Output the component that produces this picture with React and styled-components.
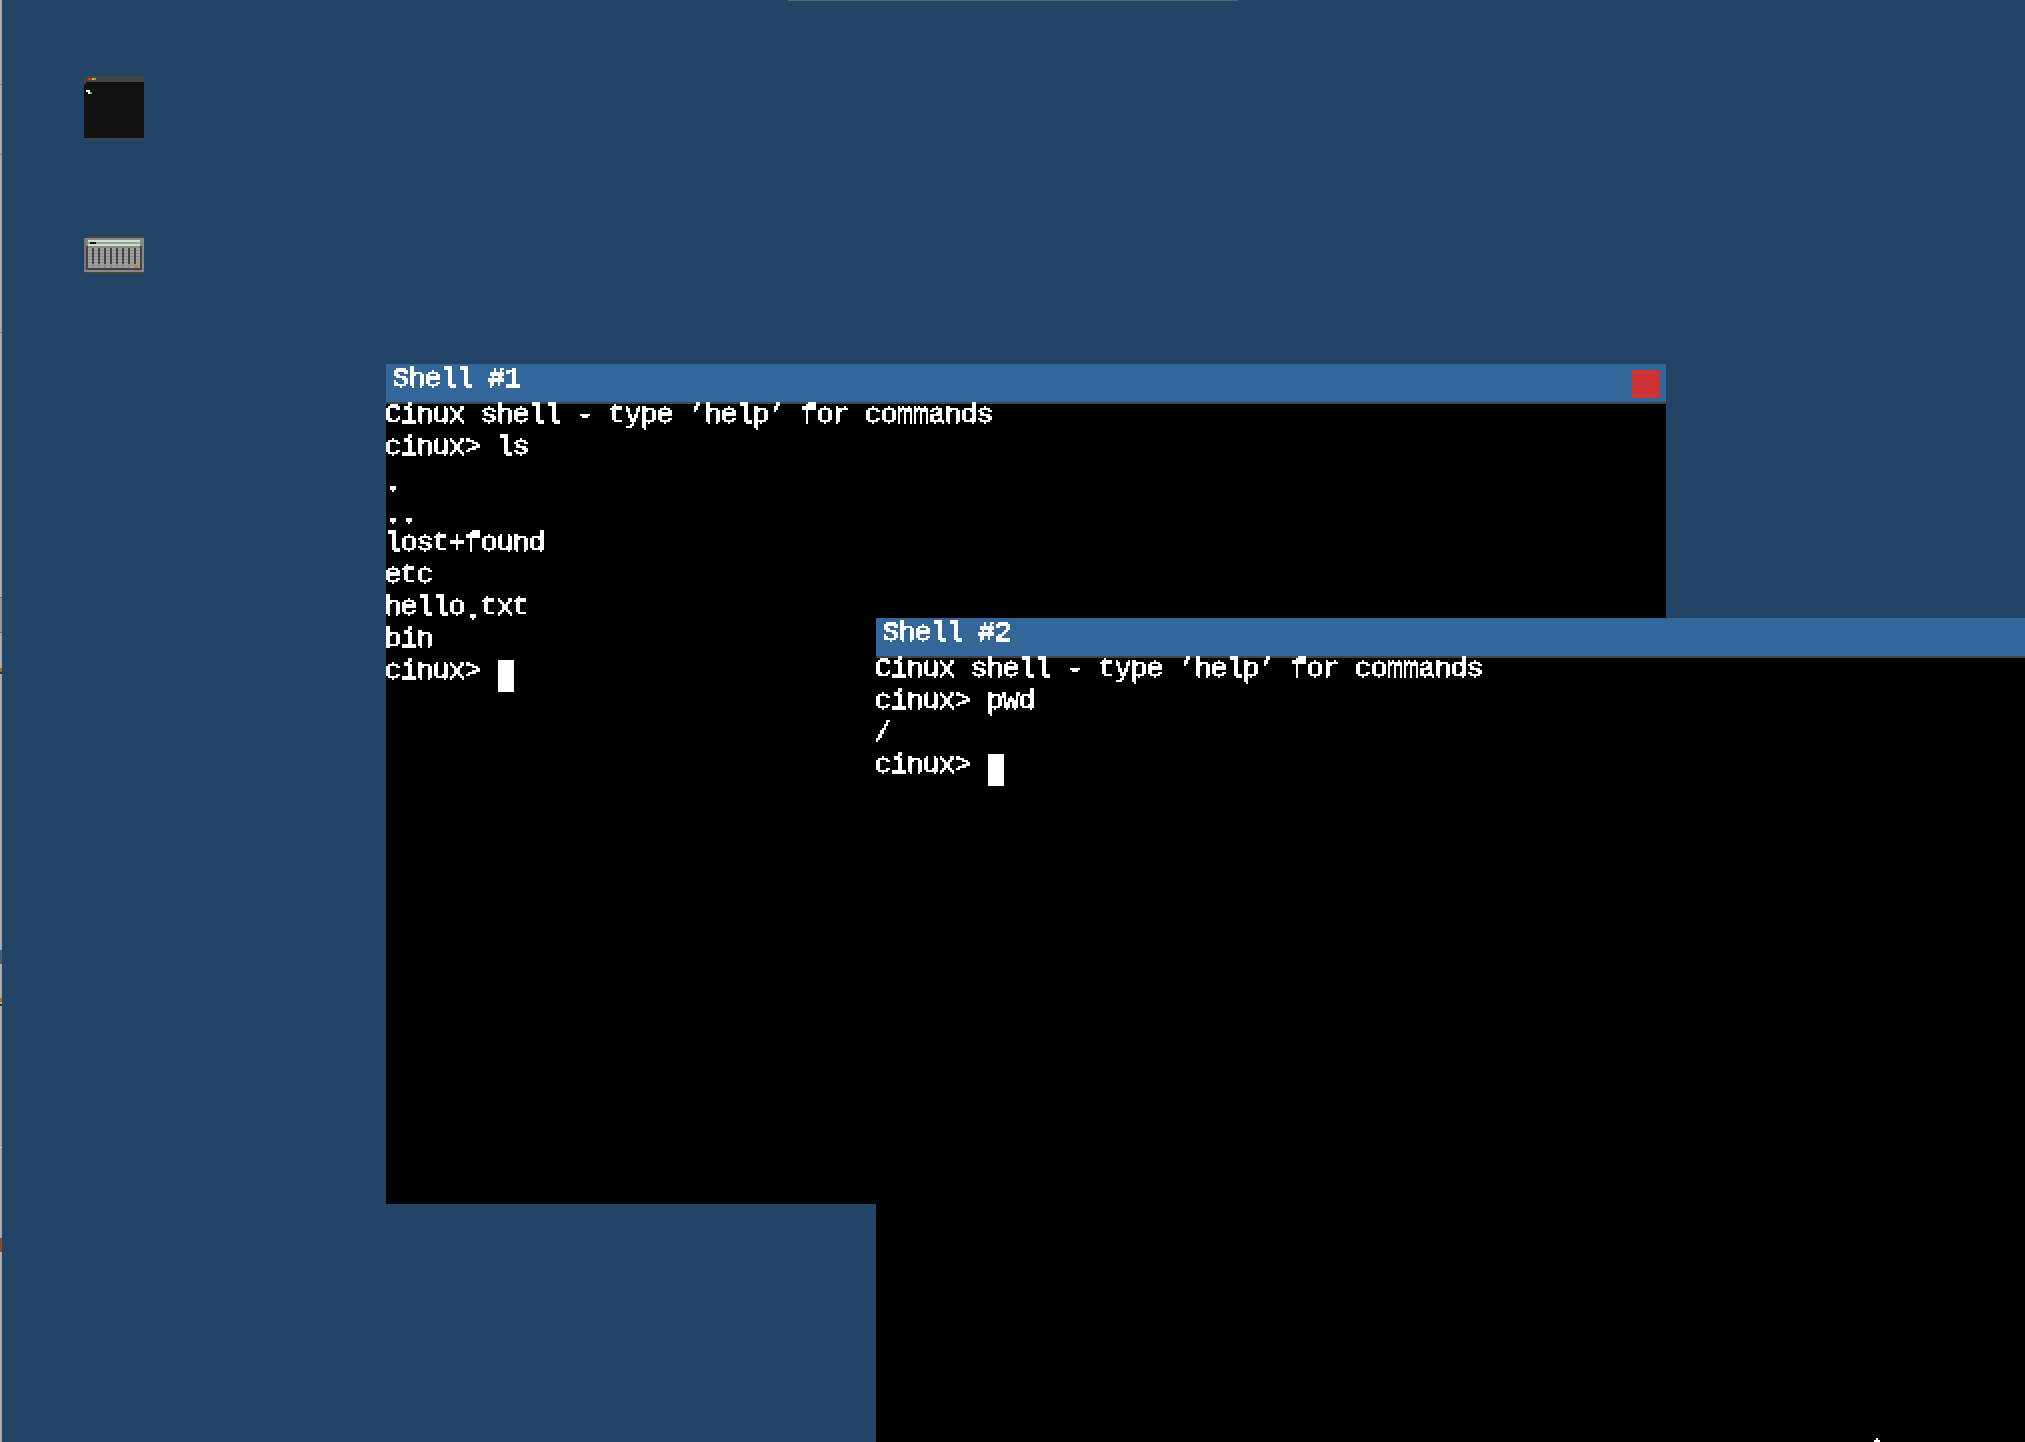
import React from 'react';
import styled, { createGlobalStyle } from 'styled-components';

const GlobalStyle = createGlobalStyle`
  html, body {
    margin: 0;
    padding: 0;
    background: #224466;
  }
`;

// Desktop is the free canvas, windows sit on it at their own coordinates
const Desktop = styled.div`
  position: relative;
  width: 2025px;
  height: 1442px;
  overflow: hidden;
  background: #224466;
  font-family: "Liberation Mono", "DejaVu Sans Mono", monospace;
  font-size: 28px;
  letter-spacing: -0.8px;
  color: #fff;
  -webkit-text-stroke: 0.5px #fff;
`;

const TopSliver = styled.div`
  position: absolute;
  left: 788px;
  top: 0;
  width: 450px;
  height: 1px;
  background: #666;
`;

const EdgeStrip = styled.svg`
  position: absolute;
  left: 0;
  top: 0;
  display: block;
`;

const IconColumn = styled.div`
  display: flex;
  flex-direction: column;
  gap: 96px;
  position: absolute;
  left: 84px;
  top: 76px;
`;

const PixelIcon = styled.svg`
  display: block;
  shape-rendering: crispEdges;
`;

const Win = styled.section`
  position: absolute;
  left: ${(p) => p.$x}px;
  top: ${(p) => p.$y}px;
  width: 1280px;
  height: 840px;
  background: #000;
  display: flex;
  flex-direction: column;
`;

const TitleBar = styled.header`
  height: 38px;
  box-sizing: border-box;
  padding: 4px 6px 0 6px;
  background: #336699;
  display: flex;
  justify-content: space-between;
  line-height: 21px;
  white-space: pre;
`;

const TitleText = styled.span`
  filter: url(#blocky);
`;

const CloseButton = styled.div`
  width: 28px;
  height: 28px;
  margin-top: 2px;
  background: #cc3333;
`;

const Separator = styled.div`
  height: 2px;
  background: #444;
`;

const Output = styled.div`
  display: flex;
  flex-direction: column;
  margin-left: -2px;
  filter: url(#blocky);
`;

const Line = styled.div`
  display: flex;
  align-items: flex-start;
  height: 32px;
  line-height: 21px;
  white-space: pre;
`;

// the shell font draws its full stop lower than the baseline
const LowDot = styled.span`
  margin-top: 4px;
`;

const Caret = styled.span`
  width: 16px;
  height: 32px;
  margin-left: 2px;
  background: #fff;
`;

const Pointer = styled.svg`
  position: absolute;
  left: 1874px;
  top: 1438px;
  display: block;
  shape-rendering: crispEdges;
`;

const HiddenDefs = styled.svg`
  position: absolute;
  width: 0;
  height: 0;
`;

const px = (x, y, w, h, fill) => <rect key={`${x}-${y}-${w}-${h}-${fill}`} x={x} y={y} width={w} height={h} fill={fill} />;

const TerminalIcon = () => (
  <PixelIcon width="60" height="64" viewBox="0 0 60 64">
    {px(2, 0, 58, 6, '#444444')}
    {px(0, 2, 2, 6, '#444444')}
    {px(0, 6, 60, 56, '#111111')}
    {px(0, 6, 2, 2, '#444444')}
    {px(2, 62, 58, 2, '#444444')}
    {px(4, 2, 4, 2, '#cc3333')}
    {px(8, 2, 2, 2, '#ccbb33')}
    {px(10, 2, 2, 2, '#33cc33')}
    {px(2, 14, 4, 2, '#ffffff')}
    {px(4, 16, 2, 2, '#ffffff')}
    {px(6, 16, 2, 2, '#33cc33')}
  </PixelIcon>
);

const keyColumns = [0, 1, 2, 3, 4, 5, 6, 7, 8];
const keyRows = [0, 1, 2, 3, 4, 5, 6];

const KeyboardIcon = () => (
  <PixelIcon width="60" height="38" viewBox="0 0 60 38">
    {px(2, 0, 58, 2, '#444444')}
    {px(0, 2, 60, 34, '#888888')}
    {px(0, 2, 2, 32, '#777777')}
    {px(2, 36, 58, 2, '#444444')}
    {px(4, 4, 52, 2, '#cfe0c8')}
    {px(4, 6, 52, 2, '#93a58f')}
    {px(6, 6, 6, 2, '#111111')}
    {px(4, 8, 52, 2, '#cfe0c8')}
    {px(2, 10, 2, 22, '#444444')}
    {px(56, 10, 2, 24, '#444444')}
    {px(2, 32, 56, 2, '#444444')}
    {px(4, 10, 52, 22, '#8a8a8a')}
    {keyColumns.map((c) => (
      <React.Fragment key={c}>
        {keyRows.map((r) => px(4 + c * 6, 12 + r * 3, 4, 2, '#a2a2a2'))}
        {c < 8 && px(8 + c * 6, 12, 2, 16, '#444444')}
      </React.Fragment>
    ))}
    {px(50, 28, 2, 2, '#e87a10')}
    {px(52, 30, 2, 2, '#e87a10')}
  </PixelIcon>
);

const Shell = ({ title, x, y, closable, children }) => (
  <Win $x={x} $y={y}>
    <TitleBar>
      <TitleText>{title}</TitleText>
      {closable && <CloseButton />}
    </TitleBar>
    <Separator />
    <Output>{children}</Output>
  </Win>
);

export default function App() {
  return (
    <Desktop>
      <GlobalStyle />
      <HiddenDefs aria-hidden="true">
        {/* samples every second pixel and grows it to a 2x2 block, like the scaled bitmap font */}
        <filter id="blocky" x="0" y="0" width="100%" height="100%" colorInterpolationFilters="sRGB">
          <feFlood x="0" y="0" width="1" height="1" floodColor="#fff" />
          <feComposite x="0" y="0" width="2" height="2" />
          <feTile result="grid" />
          <feComposite in="SourceGraphic" in2="grid" operator="in" result="dots" />
          <feOffset in="dots" dx="1" dy="0" result="right" />
          <feOffset in="dots" dx="0" dy="1" result="down" />
          <feOffset in="dots" dx="1" dy="1" result="diag" />
          <feMerge>
            <feMergeNode in="dots" />
            <feMergeNode in="right" />
            <feMergeNode in="down" />
            <feMergeNode in="diag" />
          </feMerge>
          <feComponentTransfer>
            <feFuncA type="discrete" tableValues="0 1 1 1" />
          </feComponentTransfer>
        </filter>
      </HiddenDefs>
      <TopSliver />
      <EdgeStrip width="2" height="1442" viewBox="0 0 2 1442" shapeRendering="crispEdges">
        <rect width="2" height="1442" fill="#aaaaaa" />
        <rect y="84" width="2" height="1" fill="#888888" />
        <rect y="154" width="2" height="1" fill="#888888" />
        <rect y="332" width="2" height="1" fill="#888888" />
        <rect y="597" width="2" height="36" fill="#999999" />
        <rect y="597" width="2" height="1" fill="#666666" />
        <rect y="632" width="2" height="1" fill="#666666" />
        <rect y="668" width="2" height="4" fill="#b5651d" />
        <rect y="672" width="2" height="2" fill="#333333" />
        <rect y="950" width="2" height="14" fill="#445f7a" />
        <rect y="998" width="2" height="4" fill="#b5651d" />
        <rect y="1004" width="2" height="2" fill="#333333" />
        <rect y="1147" width="2" height="1" fill="#cccccc" />
        <rect y="1238" width="2" height="14" fill="#8a4a2a" />
      </EdgeStrip>
      <IconColumn>
        <TerminalIcon />
        <KeyboardIcon />
      </IconColumn>

      <Shell title="Shell #1" x={386} y={364} closable>
        <Line>Cinux shell - type ’help’ for commands</Line>
        <Line>cinux&gt; ls</Line>
        <Line><LowDot>.</LowDot></Line>
        <Line><LowDot>..</LowDot></Line>
        <Line>lost+found</Line>
        <Line>etc</Line>
        <Line>hello<LowDot>.</LowDot>txt</Line>
        <Line>bin</Line>
        <Line>cinux&gt; <Caret /></Line>
      </Shell>

      <Shell title="Shell #2" x={876} y={618}>
        <Line>Cinux shell - type ’help’ for commands</Line>
        <Line>cinux&gt; pwd</Line>
        <Line>/</Line>
        <Line>cinux&gt; <Caret /></Line>
      </Shell>

      <Pointer width="6" height="4" viewBox="0 0 6 4">
        <rect x="2" y="0" width="2" height="2" fill="#fff" />
        <rect x="0" y="2" width="6" height="2" fill="#fff" />
      </Pointer>
    </Desktop>
  );
}
